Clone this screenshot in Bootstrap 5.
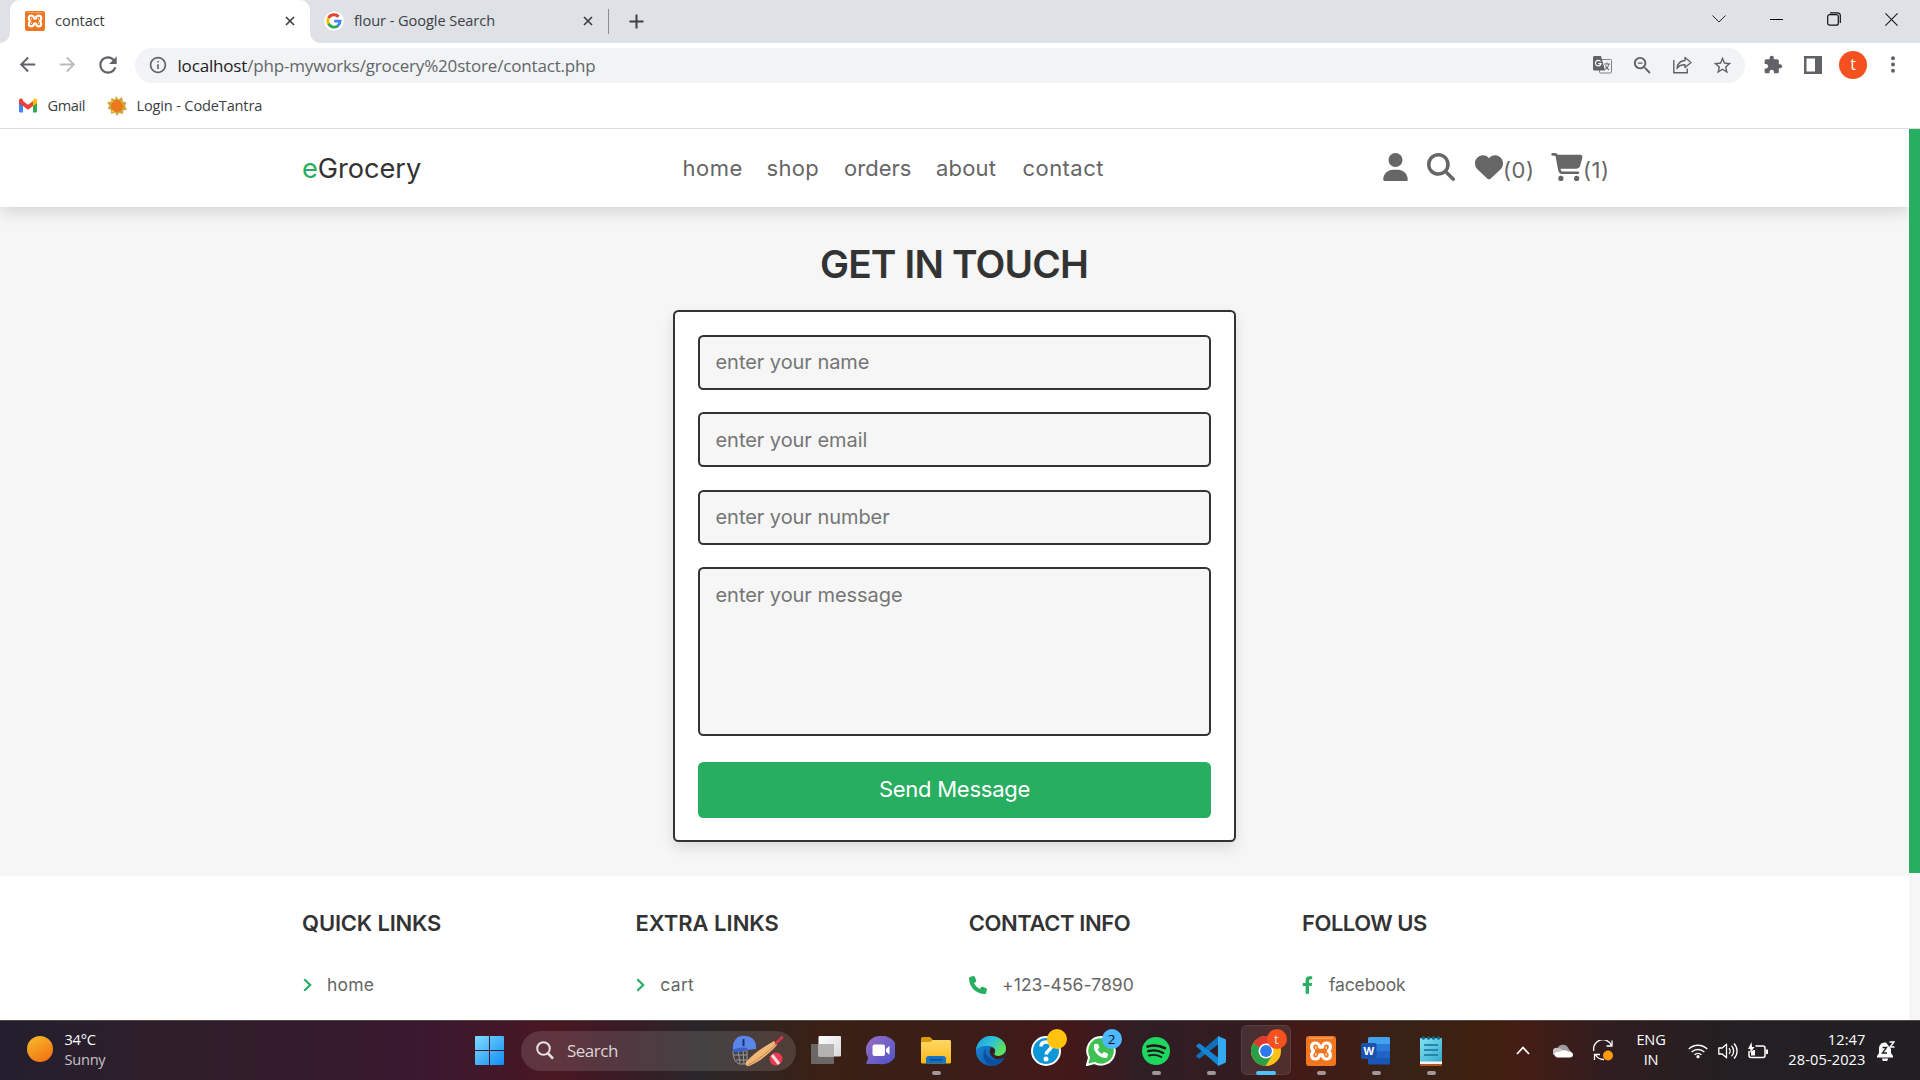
<!DOCTYPE html>
<html lang="en">
<head>
<meta charset="utf-8">
<meta name="viewport" content="width=device-width, initial-scale=1">
<title>contact</title>
<link href="https://cdn.jsdelivr.net/npm/bootstrap@5.3.0/dist/css/bootstrap.min.css" rel="stylesheet">
<script src="https://cdn.jsdelivr.net/npm/bootstrap@5.3.0/dist/js/bootstrap.bundle.min.js"></script>
<style>
:root{--green:#27ae60;--ink:#333;--soft:#666;--chrome:#5f6368}
body{width:1920px;height:1080px;overflow:hidden;background:#fff;font-family:"Open Sans","Noto Sans",sans-serif;font-size:14.6px;line-height:20px;color:#3c4043}
svg{display:block;flex:none}
.cell{display:flex;align-items:center;justify-content:center;flex:none;width:40px}
/* browser */
.tabstrip{height:43px;background:#dee1e6;padding-left:10px;flex:none}
.tab-on{width:300px;background:#fff;border-radius:10px 10px 0 0;padding:0 15px 2px;position:relative}
.tab-on::before,.tab-on::after{content:"";position:absolute;bottom:0;width:10px;height:10px}
.tab-on::before{left:-10px;background:radial-gradient(circle at 0 0,#dee1e6 9.5px,#fff 10px)}
.tab-on::after{right:-10px;background:radial-gradient(circle at 100% 0,#dee1e6 9.5px,#fff 10px)}
.tab-off{width:299px;padding:0 15px 1px 14px;border-right:1px solid #8a8d91;height:25px;margin-top:9px}
.tab-t{margin-left:10px;margin-top:-1px;line-height:24px;letter-spacing:-.07px}
.tab-off .tab-t{margin-top:-2px}
.wincell{width:57.3px;height:38px}
.toolbar{height:43px;padding:0 8px 0 7px;flex:none}
.omni{width:1610px;height:35px;border-radius:18px;background:#f1f3f4;margin:1px 8px 0 8px;padding:0 3px 0 14px;font-size:17px;letter-spacing:-.17px;color:#202124}
.omni .path{color:#62666a}
.omni .url{margin-left:10.5px;padding-top:1.5px}
.avatar{width:28px;height:28px;border-radius:50%;background:#f4511e;color:#fff;font-size:16px;line-height:27px;text-align:center}
.bookmarks{height:43px;padding:0 0 4px 18px;border-bottom:1px solid #dadce0;flex:none}
/* shop page */
.viewport{height:891px;flex:none;font-family:Inter,Roboto,sans-serif}
.page{width:1909px;background:#f6f6f6;overflow:hidden}
.rail{width:11px;background:#f6f6f6}
.rail-thumb{height:744px;background:var(--green)}
.site-head{height:78px;background:#fff;box-shadow:0 5.5px 14px rgba(0,0,0,.12);padding:0 0 0 302px;flex:none;position:relative}
.brand{font-size:27.2px;letter-spacing:-.05px;width:380.5px;color:var(--ink);line-height:40px;padding-top:2px;flex:none}
.brand span{color:var(--green)}
.site-nav{font-size:22px;color:var(--soft);line-height:30px;width:700.5px;flex:none}
.site-nav a{color:inherit;text-decoration:none}
.site-nav a:nth-child(1){width:84px;letter-spacing:.5px}
.site-nav a:nth-child(2){width:77.5px;letter-spacing:.35px}
.site-nav a:nth-child(3){width:92px;letter-spacing:.02px}
.site-nav a:nth-child(4){width:86.5px;letter-spacing:.2px}
.site-nav a:nth-child(5){letter-spacing:.45px}
.acts{color:var(--soft);font-size:22px;line-height:30px;letter-spacing:.5px;padding-bottom:2px;flex:none}
.acts span{padding-top:5px}
.headline{font-size:38.8px;font-weight:600;color:var(--ink);letter-spacing:-.85px;line-height:50px;margin:32px 0 0;text-align:center;width:1908px}
.formbox{width:563px;height:532px;border:2px solid var(--ink);border-radius:5.5px;background:#fff;box-shadow:0 5.5px 14px rgba(0,0,0,.11);padding:23px;margin:21px 0 0 673px}
.fld,.fld:focus{height:55px;border:2px solid var(--ink);border-radius:5.5px;background:#f6f6f6;padding:0 15px .6px 15.5px;margin-bottom:22.4px;font-size:20px;line-height:24px;box-shadow:none;color:var(--ink);letter-spacing:-.05px}
.fld::placeholder{color:#757575;opacity:1}
textarea.fld{height:169px;padding-top:14px;resize:none;margin-bottom:26px}
.btn-send,.btn-send:hover{height:56px;background:var(--green);color:#fff;border:0;border-radius:5.5px;font-size:22px;letter-spacing:-.25px;padding-bottom:8px}
.site-foot{background:#fff;height:144px;margin-top:34px;padding:29px 0 0 302.5px;flex:none}
.fcol{width:333.3px;flex:none}
.fcol h3{font-size:22px;font-weight:600;color:var(--ink);line-height:36px;margin:0 0 0 -.4px;letter-spacing:-.2px;white-space:nowrap}
.fcol a{display:flex;align-items:center;height:26px;margin-top:31px;font-size:17.5px;color:var(--soft);text-decoration:none;letter-spacing:.05px}
/* taskbar */
.taskbar{height:60px;flex:none;border-top:1px solid #504a45;color:#fff;background:linear-gradient(90deg,#231e2e 0,#2f1f2b 150px,#331b2b 300px,#3b1830 430px,#491722 555px,#3a1b26 620px,#2a2629 700px,#3a2015 820px,#3b1e17 950px,#441819 1070px,#2f1e25 1140px,#331c20 1240px,#431a16 1300px,#382217 1400px,#40200f 1490px,#451d14 1520px,#2f1d20 1610px,#231f22 1740px,#221f24 1920px)}
.wx{width:475px;padding-left:27px;line-height:20px;letter-spacing:-.25px}
.wx-sun{width:26px;height:26px;border-radius:50%;background:linear-gradient(150deg,#f6bd2c,#f26a10);margin-right:11.5px;margin-top:-3px}
.wx-text{padding-bottom:4px}
.srch{width:275px;height:40px;border-radius:20px;margin:0 2px 0 17px;padding:0 12px 0 15px;background:rgba(255,255,255,.13);font-size:17px;letter-spacing:-.5px;color:#dcd6d6}
.app{width:55px;height:59px;position:relative}
.app.run::after{content:"";position:absolute;bottom:5px;left:23.5px;width:9px;height:4px;border-radius:2px;background:#a09898}
.app.act::before{content:"";position:absolute;left:2.5px;top:4px;width:50px;height:50px;border-radius:6px;background:rgba(255,255,255,.09);border:1px solid rgba(255,255,255,.08)}
.app.act svg{position:relative}
.app.act::after{left:17.5px;width:20px;background:#4cc2ff}
.dotb{position:absolute;left:28.5px;top:8px;width:20px;height:20px;border-radius:50%;font-size:13.5px;line-height:20px;text-align:center}
.lang{width:56px;text-align:center;line-height:20px;letter-spacing:-.2px;margin-right:4px;padding-bottom:3px}
.clock{width:92.5px;text-align:right;line-height:20px;letter-spacing:.1px;padding-bottom:4px}
</style>
</head>
<body class="d-flex flex-column">
<svg width="0" height="0" style="position:absolute">
  <defs>
    <symbol id="xampp" viewBox="0 0 30 30"><rect width="30" height="30" rx="3" fill="#f0761f"/><rect x="3" y="1.500" width="24" height="1.500" rx=".7" fill="#f9a05e"/><path d="M15 11.200h-1.300C13.200 8 11.500 7 9.300 7 5 7 4.500 12.200 7.600 15 4.500 17.800 5 23 9.300 23c2.200 0 3.900-1 4.400-4.200h2.600c.5 3.200 2.200 4.200 4.400 4.200 4.300 0 4.800-5.200 1.700-8 3.100-2.800 2.600-8-1.700-8-2.200 0-3.900 1-4.400 4.200z" fill="none" stroke="#fff" stroke-width="3.200" stroke-linejoin="round"/><path d="M9.800 10.500v2.300M20.200 10.500v2.300M9.800 17.200v2.300M20.200 17.200v2.300" stroke="#fff" stroke-width="1.200"/></symbol>
    <symbol id="x-tab" viewBox="0 0 10 10"><path d="M1 1l8 8M9 1L1 9" stroke="#3c4043" stroke-width="1.700"/></symbol>
    <symbol id="arrow" viewBox="0 0 24 24"><path fill="currentColor" d="M20 11H7.830l5.590-5.590L12 4l-8 8 8 8 1.410-1.410L7.830 13H20v-2z"/></symbol>
    <symbol id="phone" viewBox="0 0 512 512"><path fill="currentColor" d="M164.900 24.600c-7.700-18.600-28-28.500-47.400-23.200l-88 24C12.100 30.200 0 46 0 64C0 311.400 200.600 512 448 512c18 0 33.800-12.100 38.600-29.500l24-88c5.300-19.400-4.600-39.700-23.200-47.400l-96-40c-16.300-6.800-35.200-2.100-46.300 11.600L304.700 368C234.300 334.700 177.300 277.700 144 207.300L193.300 167c13.700-11.200 18.400-30 11.600-46.300l-40-96z"/></symbol>
    <linearGradient id="gWin" x1="0" y1="0" x2="1" y2="1"><stop offset="0" stop-color="#7fdcff"/><stop offset="1" stop-color="#0f8cf5"/></linearGradient>
    <linearGradient id="gChat" x1="0" y1="0" x2="1" y2="1"><stop offset="0" stop-color="#9a6fc4"/><stop offset="1" stop-color="#4a52c8"/></linearGradient>
    <linearGradient id="gFold" x1="0" y1="0" x2="0" y2="1"><stop offset="0" stop-color="#ffd765"/><stop offset="1" stop-color="#fbb917"/></linearGradient>
    <linearGradient id="gEdge" x1="0" y1="0" x2="1" y2=".5"><stop offset="0" stop-color="#1a9be0"/><stop offset=".55" stop-color="#2fc3d4"/><stop offset="1" stop-color="#62e05a"/></linearGradient>
    <linearGradient id="gEdge2" x1="0" y1="0" x2="1" y2="1"><stop offset="0" stop-color="#1a8fe0"/><stop offset="1" stop-color="#0b4a9c"/></linearGradient>
    <linearGradient id="gPad" x1="0" y1="0" x2="1" y2="1"><stop offset="0" stop-color="#85e3f5"/><stop offset="1" stop-color="#35a9cf"/></linearGradient>
    <linearGradient id="gView" x1="0" y1="0" x2="1" y2="1"><stop offset="0" stop-color="#fff"/><stop offset="1" stop-color="#d8d8d8"/></linearGradient>
  </defs>
</svg>

<div class="tabstrip d-flex">
  <div class="tab-on d-flex align-items-center">
    <svg width="20" height="20"><use href="#xampp"/></svg><span class="tab-t">contact</span>
    <svg class="ms-auto" width="10" height="10"><use href="#x-tab"/></svg>
  </div>
  <div class="tab-off d-flex align-items-center">
    <svg width="20" height="20" viewBox="0 0 20 20"><circle cx="10" cy="10" r="9.800" fill="#fff"/><g fill="none" stroke-width="2.900"><path d="M14.600 5.700A6.200 6.200 0 0 0 4.500 7.200" stroke="#ea4335"/><path d="M4.600 7a6.200 6.200 0 0 0 0 6" stroke="#fbbc05"/><path d="M4.500 12.800a6.200 6.200 0 0 0 9.300 2" stroke="#34a853"/><path d="M13.600 15a6.200 6.200 0 0 0 2.500-4.900H10.200" stroke="#4285f4"/></g></svg>
    <span class="tab-t">flour - Google Search</span>
    <svg class="ms-auto" width="10" height="10"><use href="#x-tab"/></svg>
  </div>
  <svg style="margin:13.5px 0 0 19.5px" width="15" height="15" viewBox="0 0 15 15"><path d="M7.500 .5v14M.5 7.500h14" stroke="#3c4043" stroke-width="2"/></svg>
  <div class="d-flex ms-auto">
    <div class="cell wincell"><svg width="14" height="8" viewBox="0 0 14 8" fill="none" stroke="#222"><path d="M.5.5L7 7 13.500.5"/></svg></div>
    <div class="cell wincell"><svg width="13" height="13" viewBox="0 0 13 13"><path d="M0 6.500h13" stroke="#000"/></svg></div>
    <div class="cell wincell"><svg width="14" height="14" viewBox="0 0 14 14" fill="none" stroke="#111" stroke-width="1.200"><rect x=".7" y="2.600" width="10.600" height="10.600" rx="2"/><path d="M3 .8h7.500a2.700 2.700 0 0 1 2.800 2.700V11"/></svg></div>
    <div class="cell wincell"><svg width="13" height="13" viewBox="0 0 13 13"><path d="M.4.4l12.200 12.200M12.600.4L.4 12.600" stroke="#222" stroke-width="1.200"/></svg></div>
  </div>
</div>

<div class="toolbar d-flex align-items-center">
  <div class="cell"><svg width="23" height="23" style="color:#5f6368"><use href="#arrow"/></svg></div>
  <div class="cell"><svg width="23" height="23" style="color:#babcbe;transform:scaleX(-1)"><use href="#arrow"/></svg></div>
  <div class="cell" style="padding-left:1px"><svg width="26" height="26" viewBox="0 0 24 24"><path fill="#5f6368" d="M17.650 6.350C16.200 4.900 14.210 4 12 4c-4.420 0-7.990 3.580-7.990 8s3.570 8 7.990 8c3.730 0 6.840-2.550 7.730-6h-2.080c-.82 2.330-3.040 4-5.650 4-3.310 0-6-2.690-6-6s2.690-6 6-6c1.660 0 3.140.69 4.220 1.780L13 11h7V4l-2.350 2.350z"/></svg></div>
  <div class="omni d-flex align-items-center">
    <svg width="18" height="18" viewBox="1 1 22 22"><path fill="#5f6368" d="M11 7h2v2h-2zm0 4h2v6h-2zm1-9C6.480 2 2 6.480 2 12s4.480 10 10 10 10-4.480 10-10S17.520 2 12 2zm0 18c-4.410 0-8-3.590-8-8s3.590-8 8-8 8 3.590 8 8-3.590 8-8 8z"/></svg>
    <div class="url">localhost<span class="path">/php-myworks/grocery%20store/contact.php</span></div>
    <div class="cell ms-auto"><svg width="19" height="18" viewBox="0 0 19 18"><rect x="6.500" y="3.500" width="12" height="13.500" rx="1" fill="#f1f3f4" stroke="#7d8185"/><path d="M1.500 0H8l4 14.500H1.500A1.500 1.500 0 0 1 0 13V1.500A1.500 1.500 0 0 1 1.500 0z" fill="#5f6368"/><path d="M7.500 5.500A2.800 2.800 0 1 0 8 7.600H5.300" fill="none" stroke="#fff" stroke-width="1.200"/><path d="M11 8h6M14 6.500V8M16 8c-.5 2.500-2.500 4.500-4 5.500M12.300 9.500c.7 1.500 2.200 3.300 3.700 4.500" fill="none" stroke="#6d7175" stroke-width="1.100"/></svg></div>
    <div class="cell"><svg width="23" height="23" viewBox="0 0 24 24"><path fill="#5f6368" d="M15.500 14h-.79l-.28-.27C15.410 12.590 16 11.110 16 9.500 16 5.910 13.090 3 9.500 3S3 5.910 3 9.500 5.910 16 9.500 16c1.610 0 3.090-.59 4.230-1.570l.27.28v.79l5 4.990L20.490 19l-4.990-5zm-6 0C7.010 14 5 11.990 5 9.500S7.010 5 9.500 5 14 7.010 14 9.500 11.990 14 9.500 14zM7 8.800h5v1.300H7z"/></svg></div>
    <div class="cell"><svg width="19" height="18" viewBox="0 0 19 18" fill="none" stroke="#5f6368" stroke-width="1.400"><path d="M.8 4v12.800h13.500V12.500"/><path d="M12 1.500l6 5-6 5V8.800c-4 0-6.500 1-8 3.700.3-4.500 3-7.500 8-8z" stroke-linejoin="round"/></svg></div>
    <div class="cell"><svg width="21" height="21" viewBox="0 0 24 24"><path fill="#5f6368" d="M22 9.240l-7.190-.62L12 2 9.190 8.630 2 9.240l5.460 4.730L5.820 21 12 17.270 18.180 21l-1.630-7.030L22 9.240zM12 15.400l-3.760 2.270 1-4.280-3.320-2.880 4.380-.38L12 6.100l1.710 4.040 4.380.38-3.320 2.880 1 4.280L12 15.400z"/></svg></div>
  </div>
  <div class="cell"><svg width="20" height="20" viewBox="0 0 24 24"><path fill="#5f6368" d="M20.500 11H19V7c0-1.100-.9-2-2-2h-4V3.500C13 2.120 11.880 1 10.500 1S8 2.120 8 3.500V5H4c-1.100 0-1.990.9-1.990 2v3.800H3.500c1.490 0 2.700 1.210 2.700 2.700s-1.210 2.700-2.700 2.700H2V20c0 1.100.9 2 2 2h3.800v-1.500c0-1.490 1.210-2.700 2.700-2.700 1.490 0 2.700 1.210 2.700 2.700V22H17c1.100 0 2-.9 2-2v-4h1.500c1.380 0 2.500-1.120 2.500-2.500S21.880 11 20.500 11z"/></svg></div>
  <div class="cell"><svg width="18" height="18" viewBox="0 0 18 18"><path fill="#5f6368" fill-rule="evenodd" d="M0 0h18v18H0zM2.500 2.500v13H11v-13z"/></svg></div>
  <div class="cell"><div class="avatar">t</div></div>
  <div class="cell" style="width:39px"><svg width="4" height="17" viewBox="0 0 4 17" fill="#5f6368"><circle cx="2" cy="2.200" r="2"/><circle cx="2" cy="8.500" r="2"/><circle cx="2" cy="14.800" r="2"/></svg></div>
</div>

<div class="bookmarks d-flex align-items-center">
  <svg width="20" height="15" viewBox="0 0 20 15"><path d="M1 2v11.500a1 1 0 0 0 1 1h3V6z" fill="#4285f4"/><path d="M19 2v11.500a1 1 0 0 1-1 1h-3V6z" fill="#34a853"/><path d="M1 2.200v3L5 8V3z" fill="#c5221f"/><path d="M15 3v5l4-2.800v-3C19 .6 17.200-.1 16 .9z" fill="#fbbc04"/><path d="M5 8V3l5 3.800L15 3v5l-5 3.700zM1 2.200C1 .6 2.800-.1 4 .9L5 1.700V8L1 5.200z" fill="#ea4335"/></svg>
  <span style="margin-left:9.5px;letter-spacing:-.4px;width:37.5px">Gmail</span>
  <svg style="margin-left:22px;margin-top:1px" width="20" height="20" viewBox="0 0 20 20"><path d="M9 0l2.500 3.500L15 1l1 4.500L19.500 6.500 18 10l2 3.500-3.800 1-.2 3.500-4-1-2 3-2-3.500-3.800 1.500-.2-4L.5 12.500l2-2.700L0 6.500l3.800-1L4.500 2 8 3.500z" fill="#cfa63a"/><path d="M4 4.500L7.500 6 5 8zM15 5l1 3-3-2zM5 16l1-3.500L8.500 15z" fill="#f5dc6a"/><circle cx="10" cy="10" r="6" fill="#e9791a"/></svg>
  <span style="margin-left:9.5px;letter-spacing:-.17px">Login - CodeTantra</span>
</div>

<div class="viewport d-flex">
  <div class="page d-flex flex-column">
    <header class="site-head d-flex align-items-center">
      <div class="brand"><span>e</span>Grocery</div>
      <nav class="site-nav d-flex"><a href="#">home</a><a href="#">shop</a><a href="#">orders</a><a href="#">about</a><a href="#">contact</a></nav>
      <div class="acts d-flex align-items-center">
        <svg width="25" height="28" viewBox="0 0 448 512" fill="currentColor"><path d="M224 256A128 128 0 1 0 224 0a128 128 0 1 0 0 256zm-45.700 48C79.800 304 0 383.800 0 482.300C0 498.700 13.300 512 29.700 512H418.300c16.400 0 29.700-13.300 29.700-29.700C448 383.800 368.200 304 269.700 304H178.300z"/></svg>
        <svg style="margin-left:19px" width="28" height="28" viewBox="0 0 512 512" fill="currentColor"><path d="M416 208c0 45.900-14.900 88.300-40 122.700L502.600 457.400c12.500 12.500 12.500 32.800 0 45.300s-32.800 12.500-45.300 0L330.700 376c-34.400 25.200-76.800 40-122.700 40C93.100 416 0 322.900 0 208S93.100 0 208 0S416 93.100 416 208zM208 352a144 144 0 1 0 0-288 144 144 0 1 0 0 288z"/></svg>
        <svg style="margin-left:20px" width="28" height="28" viewBox="0 0 512 512" fill="currentColor"><path d="M47.600 300.400L228.300 469.100c7.500 7 17.400 10.900 27.700 10.900s20.200-3.900 27.700-10.900L464.400 300.400c30.400-28.300 47.600-68 47.600-109.500v-5.800c0-69.900-50.500-129.500-119.400-141C347 36.500 300.600 51.400 268 84L256 96 244 84c-32.600-32.600-79-47.500-124.600-39.900C50.500 55.600 0 115.200 0 185.100v5.800c0 41.500 17.200 81.200 47.600 109.500z"/></svg>
        <span style="width:48px">(0)</span>
        <svg width="32" height="28" viewBox="0 0 576 512" fill="currentColor"><path d="M0 24C0 10.700 10.700 0 24 0H69.500c22 0 41.500 12.800 50.600 32h411c26.300 0 45.500 25 38.600 50.400l-41 152.300c-8.500 31.400-37 53.300-69.500 53.300H170.700l5.400 28.500c2.200 11.300 12.100 19.500 23.600 19.500H488c13.300 0 24 10.700 24 24s-10.700 24-24 24H199.700c-34.600 0-64.300-24.600-70.700-58.500L77.400 54.500c-.7-3.800-4-6.500-7.900-6.500H24C10.700 48 0 37.300 0 24zM128 464a48 48 0 1 1 96 0 48 48 0 1 1 -96 0zm336-48a48 48 0 1 1 0 96 48 48 0 1 1 0-96z"/></svg>
        <span>(1)</span>
      </div>
    </header>
    <h1 class="headline">GET IN TOUCH</h1>
    <form class="formbox">
      <input class="form-control fld" placeholder="enter your name">
      <input class="form-control fld" placeholder="enter your email">
      <input class="form-control fld" placeholder="enter your number">
      <textarea class="form-control fld" placeholder="enter your message"></textarea>
      <button type="button" class="btn btn-send w-100">Send Message</button>
    </form>
    <footer class="site-foot d-flex">
      <div class="fcol"><h3>QUICK LINKS</h3><a href="#"><svg width="9" height="14" viewBox="0 0 9 14"><path d="M1.300 1.200L7.200 7l-5.900 5.800" fill="none" stroke="#27ae60" stroke-width="2.200"/></svg><span style="margin-left:15.5px;letter-spacing:.2px">home</span></a></div>
      <div class="fcol"><h3 style="letter-spacing:0">EXTRA LINKS</h3><a href="#"><svg width="9" height="14" viewBox="0 0 9 14"><path d="M1.300 1.200L7.200 7l-5.900 5.800" fill="none" stroke="#27ae60" stroke-width="2.200"/></svg><span style="margin-left:15.5px;letter-spacing:.3px">cart</span></a></div>
      <div class="fcol"><h3 style="letter-spacing:-.4px">CONTACT INFO</h3><a href="#"><svg width="18" height="18" style="color:#27ae60"><use href="#phone"/></svg><span style="margin-left:15px">+123-456-7890</span></a></div>
      <div class="fcol"><h3 style="letter-spacing:-.48px">FOLLOW US</h3><a href="#"><svg width="11" height="18" viewBox="0 0 320 512"><path fill="#27ae60" d="M279.140 288l14.220-92.660h-88.910v-60.130c0-25.350 12.420-50.060 52.240-50.060h40.420V6.260S260.430 0 225.360 0c-73.220 0-121.080 44.380-121.080 124.720v70.620H22.890V288h81.390v224h100.170V288z"/></svg><span style="margin-left:15.5px;letter-spacing:-.1px">facebook</span></a></div>
    </footer>
  </div>
  <div class="rail"><div class="rail-thumb"></div></div>
</div>

<div class="taskbar d-flex align-items-center">
  <div class="wx d-flex align-items-center"><div class="wx-sun"></div><div class="wx-text">34°C<br><span style="color:#c9c2c8">Sunny</span></div></div>
  <svg width="29" height="29" viewBox="0 0 29 29" fill="url(#gWin)"><path d="M0 1a1 1 0 0 1 1-1h13v14H0zM15 0h13a1 1 0 0 1 1 1v13H15zM0 15h14v14H1a1 1 0 0 1-1-1zM15 15h14v13a1 1 0 0 1-1 1H15z"/></svg>
  <div class="srch d-flex align-items-center">
    <svg width="18" height="19" viewBox="0 0 18 19" fill="none" stroke="#e8e2e2" stroke-width="2"><circle cx="7.500" cy="7.500" r="6.300"/><path d="M12 12.300l5 5.400" stroke-width="2.600"/></svg>
    <span style="margin-left:13px">Search</span>
    <svg class="ms-auto" width="53" height="32" viewBox="0 0 53 32"><path d="M2 15c0 8 2 13 7 14h7V16zM3 20h13M5 25h11M7 15l2 13M12 15l1 14" fill="none" stroke="#9a9a9e" stroke-width="1"/><path d="M2 15C1 5 7 0 14 1c8 0 12 6 11 13l-9 1c-5 0-10 3-14 0z" fill="#5a86ea"/><path d="M1 15c5-2 10-3 15-2l1 2.500c-5 0-10 3-16 1z" fill="#3a61c8"/><path d="M12.500 4v7" stroke="#1d3373" stroke-width="2" fill="none"/><path d="M15 27c-1 2 0 5 3 4 10-4 20-12 28-21l-3-4C34 11 23 18 15 27z" fill="#f0b777"/><path d="M17 30C27 25 37 17 45 9" stroke="#c98242" fill="none"/><path d="M45 8l6-5.500" stroke="#e0344a" stroke-width="2.600" stroke-linecap="round"/><circle cx="45" cy="24" r="6.500" fill="#ea3a4c"/><path d="M41 20l7 9" stroke="#f5dfe3" stroke-width="3"/></svg>
  </div>
  <div class="cell app"><svg width="30" height="29" viewBox="0 0 30 29"><rect y="8" width="23" height="20" rx="1" fill="#6b6766"/><rect x="7.500" y="0" width="22.500" height="20.500" rx="1" fill="url(#gView)"/><rect x="7.500" y="8" width="15.500" height="12.500" fill="#b5b3b2"/></svg></div>
  <div class="cell app"><svg width="29" height="29" viewBox="0 0 29 29"><path d="M14.500 0A14.200 14.200 0 1 1 14 28H1.500c-1.200 0-1.500-1-.8-2L2.300 22A14.200 14.200 0 0 1 14.500 0z" fill="url(#gChat)"/><rect x="6.500" y="8.500" width="12.500" height="11.500" rx="2" fill="#fff"/><path d="M20 13l3.500-3.200v9L20 15.700z" fill="#fff"/></svg></div>
  <div class="cell app run"><svg width="30" height="27" viewBox="0 0 30 27"><path d="M0 2a2 2 0 0 1 2-2h7l3 3H28a2 2 0 0 1 2 2v4H0z" fill="#d99a0b"/><path d="M0 5h9l3-2h16.500A1.500 1.500 0 0 1 30 4.500V25a1.500 1.500 0 0 1-1.500 1.500h-27A1.500 1.500 0 0 1 0 25z" fill="url(#gFold)"/><path d="M5 26.500V22a3 3 0 0 1 3-3h14a3 3 0 0 1 3 3v4.500z" fill="#1273c8"/><path d="M9 22.800h12" stroke="#0b4c8c" stroke-width="1.500" stroke-linecap="round"/></svg></div>
  <div class="cell app"><svg width="30" height="30" viewBox="0 0 30 30"><circle cx="15" cy="15" r="15" fill="url(#gEdge2)"/><path d="M0 14C1 6 7 0 15 0c8.500 0 15 6 15 12.500 0 4.500-3.500 7.500-7.500 7.500-3.500 0-5-1.300-4-3 2-3-.5-7-6-7C7 9.500 2 11 0 14z" fill="url(#gEdge)"/><path d="M12.500 10.500c-4 1.500-4 7 0 10.500 4 4 10 4 16 1-4 8-12 9.500-17 5.500-6-5-5.500-14 1-17z" fill="#0d4f9f"/><path d="M28.700 21.500c-5 2.500-9.500 2-12-.2-3.500-3-3.700-7-1.700-10 4 .7 5 3.500 3.500 6-1 1.500.5 2.700 4 2.700 3 0 5.500-1.500 7-4.500z" fill="#3a1e18"/></svg></div>
  <div class="cell app"><svg width="30" height="30" viewBox="0 0 30 30"><circle cx="15" cy="15" r="14" fill="#0e97d8" stroke="#fff" stroke-width="2"/><path d="M10 10.500C10 7.500 12 6 15 6s5.300 1.700 5.300 4.500c0 3.500-5 4-5 8" fill="none" stroke="#fff" stroke-width="3.500"/><circle cx="15" cy="23" r="2.500" fill="#fff"/></svg><span class="dotb" style="background:#ffc20e"></span></div>
  <div class="cell app"><svg width="30" height="30" viewBox="0 0 30 30"><path d="M15 1A13.800 13.800 0 1 1 8.500 27L1 29l2-7.500A13.800 13.800 0 0 1 15 1z" fill="#3ec152" stroke="#fff" stroke-width="2"/><svg x="7.500" y="7.500" width="14.500" height="14.500" style="color:#fff"><use href="#phone"/></svg></svg><span class="dotb" style="background:#4cb8ff;color:#111">2</span></div>
  <div class="cell app run"><svg width="28" height="28" viewBox="0 0 28 28"><circle cx="14" cy="14" r="14" fill="#1ed75f"/><g fill="none" stroke="#23161a" stroke-linecap="round"><path d="M5.500 9.500c6-1.700 12.500-1 17.500 1.700" stroke-width="2.700"/><path d="M6.200 14.200c5-1.400 10.500-.8 15 1.700" stroke-width="2.300"/><path d="M7 18.500c4.300-1.100 8.500-.6 12.300 1.500" stroke-width="1.900"/></g></svg></div>
  <div class="cell app run"><svg width="30" height="30" viewBox="0 0 30 30"><path d="M22 .5V8.500L4 22.300a1.500 1.500 0 0 1-1.700 0L.6 20.800a1 1 0 0 1 0-1.600z" fill="#0f6fb8"/><path d="M22 29.500v-8L4 7.700a1.500 1.500 0 0 0-1.700 0L.6 9.200a1 1 0 0 0 0 1.600z" fill="#1284d2"/><path d="M22 0l7 3a1.500 1.500 0 0 1 1 1.400v21.200a1.500 1.500 0 0 1-1 1.400l-7 3z" fill="#32a9f2"/></svg></div>
  <div class="cell app run act"><svg width="30" height="30" viewBox="0 0 30 30"><circle cx="15" cy="15" r="15" fill="#fbc116"/><path d="M15 15L2 7.500A15 15 0 0 0 14.500 30L21.500 18.700z" fill="#2a9f48"/><path d="M15 15L2 7.500A15 15 0 0 1 28 7.500H15z" fill="#de3b30"/><path d="M2 7.500l6.500 11.200L15 15z" fill="#2a9f48"/><circle cx="15" cy="15" r="7.500" fill="#fff"/><circle cx="15" cy="15" r="5.900" fill="#3079ea"/></svg><span class="dotb" style="background:#f4511e;color:#fbe0d6">t</span></div>
  <div class="cell app run"><svg width="30" height="30"><use href="#xampp"/></svg></div>
  <div class="cell app run"><svg width="29" height="28" viewBox="0 0 29 28"><rect x="7" width="22" height="27.500" rx="1.500" fill="#1857b8"/><path d="M7 1.500A1.500 1.500 0 0 1 8.500 0h19A1.500 1.500 0 0 1 29 1.500V7H7z" fill="#42a2ee"/><path d="M7 7h22v7H7z" fill="#2b7cd6"/><path d="M7 14h22v7H7z" fill="#2064c6"/><rect y="6" width="15.500" height="16" rx="1.500" fill="#1a52b0"/><text x="7.700" y="18" font-family="Open Sans" font-weight="700" font-size="11" fill="#fff" text-anchor="middle">W</text></svg></div>
  <div class="cell app run"><svg width="22" height="30" viewBox="0 0 22 30"><rect y="26" width="22" height="4" rx="1" fill="#b4581e"/><rect y="24" width="22" height="4" fill="#f3f3f3"/><rect y="2" width="22" height="23.500" rx="1" fill="url(#gPad)"/><g fill="#12668c"><circle cx="3.500" cy="2" r="1.800"/><circle cx="8.500" cy="2" r="1.800"/><circle cx="13.500" cy="2" r="1.800"/><circle cx="18.500" cy="2" r="1.800"/></g><path d="M4 9h14M4 14h14M4 19h14" stroke="#137398" stroke-width="1.700"/></svg></div>
  <div class="d-flex align-items-center" style="margin-left:45px">
    <div class="cell"><svg width="14" height="9" viewBox="0 0 14 9"><path d="M1 8l6-6.500L13 8" fill="none" stroke="#fff" stroke-width="1.800"/></svg></div>
    <div class="cell"><svg width="20" height="14" viewBox="0 0 20 14"><path d="M4 12a4 4 0 0 1 .5-8A6 6 0 0 1 15.500 4.500L18 8z" fill="#a19a9c"/><path d="M2.500 11.500A3.700 3.700 0 0 1 4.500 4c3 0 5 1.500 7 3.500L6 13z" fill="#c9c5c6"/><path d="M4 13.500a3 3 0 0 1-1-5.500c3 1 6-2.500 10-1.500l2.500 1c3 0 4.500 1.500 4.500 3.200s-1.300 2.800-3 2.800z" fill="#fff"/></svg></div>
    <div class="cell"><svg width="21" height="21" viewBox="0 0 21 21" fill="none" stroke="#fff" stroke-width="1.300"><path d="M.8 11A9.300 9.300 0 0 1 18.500 5.500M19 .5v5.500h-5.500M11 19.500a9.300 9.300 0 0 1-8.500-4.700M1.500 20v-5.500H7"/><circle cx="15" cy="15.500" r="5" fill="#ff9a0a" stroke="none"/></svg></div>
    <div class="lang">ENG<br>IN</div>
    <div class="cell" style="width:30px"><svg width="20" height="16" viewBox="0 0 20 16" fill="none" stroke="#fff" stroke-width="1.500"><path d="M.8 6a13 13 0 0 1 18.400 0M3.700 9a9 9 0 0 1 12.600 0M6.600 11.800a5 5 0 0 1 6.800 0"/><circle cx="10" cy="13.700" r="1.600" fill="#fff" stroke="none"/></svg></div>
    <div class="cell" style="width:30px"><svg width="20" height="18" viewBox="0 0 20 18" fill="none" stroke="#fff" stroke-width="1.300"><path d="M.8 6v6h3.400l4.300 3.800V2.200L4.200 6z" stroke-linejoin="round"/><path d="M11 6.200a4 4 0 0 1 0 5.600M13.500 3.800a7.300 7.300 0 0 1 0 10.400M16 1.500a10.700 10.700 0 0 1 0 15"/></svg></div>
    <div class="cell" style="width:30px"><svg width="20" height="18" viewBox="0 0 20 18"><path d="M7.500 4H15a2 2 0 0 1 2 2v7.500a2 2 0 0 1-2 2H3a2 2 0 0 1-2-2V9" fill="none" stroke="#fff" stroke-width="1.500"/><path d="M18 7.500h2v4.500h-2z" fill="#fff"/><path d="M3.500 0L0 7h2.500L2 11l4.500-6H4z" fill="#fff"/><path d="M3 9.500L5.500 8H7v5.500H3z" fill="#fff"/></svg></div>
    <div class="clock">12:47<br>28-05-2023</div>
    <svg style="margin-left:11.5px" width="18" height="20" viewBox="0 0 18 20"><path d="M8 1.500c-4 0-6 3-6 6V12L0 15v1.500h16V15l-2-3V8L9 1.600zM5 17.500h6a3 3 0 0 1-6 0z" fill="#fff"/><path d="M12.500 1H17l-4 5h4.500" fill="none" stroke="#fff" stroke-width="1.400"/><path d="M5.500 6.500h4L5.500 12H10" fill="none" stroke="#222" stroke-width="1.400"/></svg>
  </div>
</div>
</body>
</html>
